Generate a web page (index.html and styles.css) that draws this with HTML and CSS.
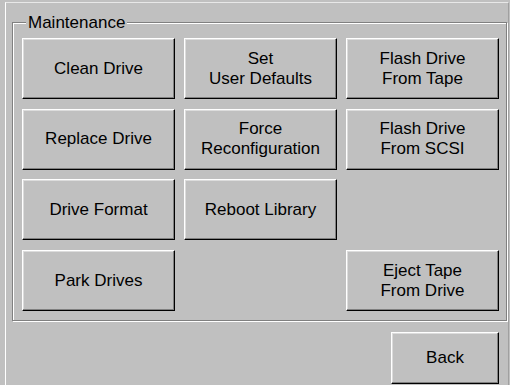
FILE: index.html
```html
<!DOCTYPE html>
<html>
<head>
<meta charset="utf-8">
<link rel="stylesheet" href="styles.css">
</head>
<body>
<div class="screen">
  <div class="group">
    <span class="legend">Maintenance</span>
    <div class="grid">
      <button class="btn">Clean Drive</button>
      <button class="btn">Set<br>User Defaults</button>
      <button class="btn">Flash Drive<br>From Tape</button>
      <button class="btn">Replace Drive</button>
      <button class="btn">Force<br>Reconfiguration</button>
      <button class="btn">Flash Drive<br>From SCSI</button>
      <button class="btn">Drive Format</button>
      <button class="btn">Reboot Library</button>
      <button class="btn col1">Park Drives</button>
      <button class="btn col3">Eject Tape<br>From Drive</button>
    </div>
  </div>
  <div class="footer">
    <button class="btn back">Back</button>
  </div>
</div>
</body>
</html>
```
FILE: styles.css
```css
html, body {
  margin: 0;
  padding: 0;
  background: #c0c0c0;
}
body {
  width: 510px;
  height: 385px;
  overflow: hidden;
  font-family: "Liberation Sans", Arial, sans-serif;
  font-size: 17px;
  color: #000;
}
.screen {
  margin: 2px 1px 0 5px;
  height: 383px;
  box-sizing: border-box;
  border-left: 1px solid #fff;
  border-top: 1px solid #e8e8e8;
  border-right: 1px solid #a0a0a0;
  padding: 19px 1px 0 6px;
}
.group {
  position: relative;
  width: 495px;
  height: 299px;
  box-sizing: border-box;
  border: 1px solid #808080;
  box-shadow: inset 1px 1px 0 #fff, 1px 1px 0 #fff;
}
.legend {
  position: absolute;
  top: -10px;
  left: 13px;
  padding: 0 2px;
  background: #c0c0c0;
  line-height: 20px;
}
.grid {
  display: grid;
  grid-template-columns: repeat(3, 153px);
  grid-auto-rows: 61px;
  column-gap: 9px;
  row-gap: 9.7px;
  padding: 15px 0 0 9px;
}
.btn {
  font: inherit;
  color: #000;
  line-height: 20px;
  background: #c0c0c0;
  border: 1px solid;
  border-color: #fff #000 #000 #fff;
  box-shadow: inset -1px -1px 0 #808080, inset 1px 1px 0 #dcdcdc;
  padding: 0;
  margin: 0;
  text-align: center;
}
.col1 { grid-column: 1; }
.col3 { grid-column: 3; }
.footer {
  display: flex;
  justify-content: flex-end;
  margin-top: 11px;
  padding-right: 8px;
}
.back {
  width: 108px;
  height: 52px;
}
```
